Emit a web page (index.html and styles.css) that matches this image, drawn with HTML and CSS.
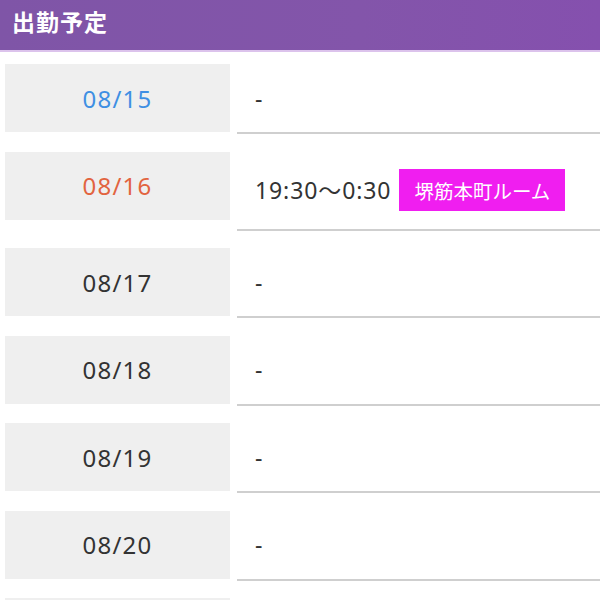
FILE: index.html
```html
<!DOCTYPE html>
<html lang="ja">
<head>
<meta charset="utf-8">
<link rel="stylesheet" href="styles.css">
</head>
<body>
<section class="schedule">
  <h2 class="schedule-title">出勤予定</h2>
  <div class="rows">
    <div class="row">
      <div class="date date-sat">08/15</div>
      <div class="info">-</div>
    </div>
    <div class="row">
      <div class="date date-sun">08/16</div>
      <div class="info"><span class="time">19:30〜0:30</span><span class="room">堺筋本町ルーム</span></div>
    </div>
    <div class="row">
      <div class="date">08/17</div>
      <div class="info">-</div>
    </div>
    <div class="row">
      <div class="date">08/18</div>
      <div class="info">-</div>
    </div>
    <div class="row">
      <div class="date">08/19</div>
      <div class="info">-</div>
    </div>
    <div class="row">
      <div class="date">08/20</div>
      <div class="info">-</div>
    </div>
    <div class="row">
      <div class="date">08/21</div>
      <div class="info">-</div>
    </div>
  </div>
</section>
</body>
</html>
```

FILE: styles.css
```css
html, body {
  margin: 0;
  padding: 0;
  background: #fff;
}
body {
  font-family: "Noto Sans CJK JP", "Noto Sans", sans-serif;
  color: #333;
}
.schedule-title {
  margin: 0;
  height: 52px;
  box-sizing: border-box;
  padding: 5px 12px 0;
  font-size: 23px;
  font-weight: 700;
  line-height: 32px;
  color: #fff;
  background: linear-gradient(to right, #7f55a7, #8355aa 60%, #8550ae);
  border-bottom: 2px solid #dcc3ec;
  letter-spacing: 1px;
}
.rows {
  padding: 12px 0 0 5px;
}
.row {
  display: flex;
  align-items: flex-start;
  gap: 7px;
  margin-bottom: 17.5px;
}
.date {
  flex: 0 0 225px;
  height: 68px;
  display: flex;
  align-items: center;
  justify-content: center;
  background: #efefef;
  font-family: "Noto Sans", sans-serif;
  font-size: 24px;
  letter-spacing: 1.2px;
  color: #333;
}
.date-sat { color: #3f8fe3; }
.date-sun { color: #e2643f; }
.info {
  flex: 1;
  min-height: 68px;
  box-sizing: border-box;
  padding: 17.5px 18px;
  display: flex;
  align-items: center;
  border-bottom: 2px solid #cfcfcf;
  font-family: "Noto Sans", "Noto Sans CJK JP", sans-serif;
  font-size: 23px;
  line-height: 33px;
  color: #333;
}
.time {
  letter-spacing: 0.9px;
}
.room {
  margin-left: 8px;
  height: 42px;
  padding: 0 15px;
  display: inline-flex;
  align-items: center;
  background: #f01ef0;
  color: #fff;
  font-family: "Noto Sans CJK JP", sans-serif;
  font-size: 19.5px;
  letter-spacing: 0;
}
```
